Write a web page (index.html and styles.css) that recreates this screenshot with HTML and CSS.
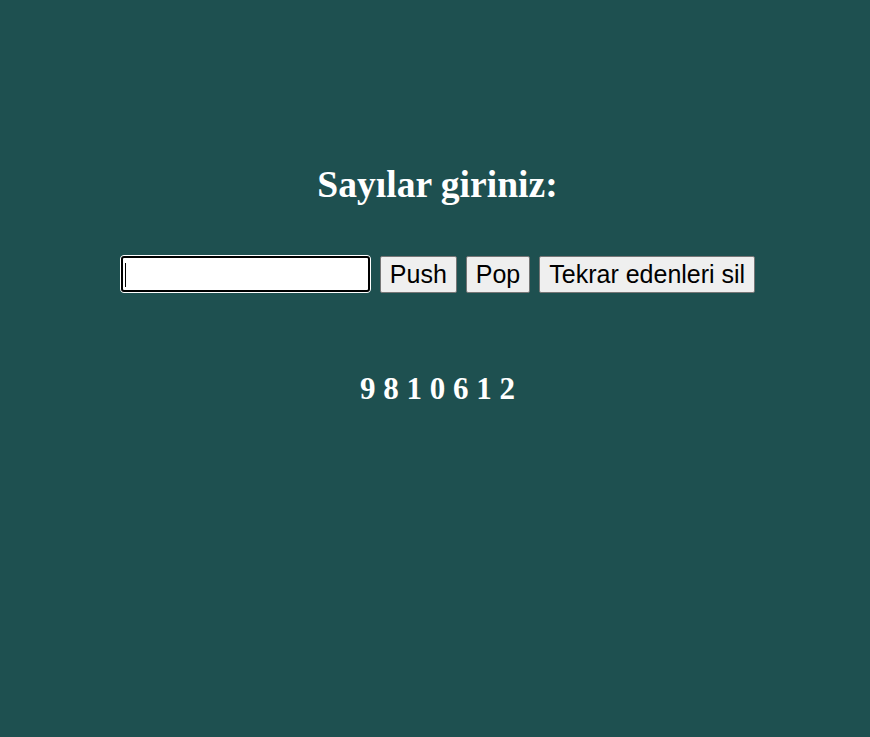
FILE: index.html
```html
<!DOCTYPE html>
<html>
<head>
<meta charset="utf-8">
<link rel="stylesheet" href="styles.css">
</head>
<body>
<div class="page">
  <h1 class="title">Sayılar giriniz:</h1>
  <div class="controls">
    <span class="input-wrap">
      <input class="num-input" type="text">
      <span class="caret"></span>
    </span>
    <button class="btn">Push</button>
    <button class="btn">Pop</button>
    <button class="btn">Tekrar edenleri sil</button>
  </div>
  <div class="stack">9 8 1 0 6 1 2</div>
</div>
</body>
</html>
```

FILE: styles.css
```css
html, body {
  margin: 0;
  padding: 0;
  background: #1e5050;
  height: 100%;
}
.page {
  display: flex;
  flex-direction: column;
  align-items: center;
  padding-top: 160px;
  padding-left: 5px;
  font-family: "Liberation Serif", "Times New Roman", serif;
  color: #fff;
}
.title {
  margin: 0;
  font-size: 37.6px;
  font-weight: bold;
  line-height: 50px;
}
.controls {
  margin-top: 45px;
  display: flex;
  align-items: center;
  gap: 9px;
}
.input-wrap {
  position: relative;
  display: block;
}
.num-input {
  display: block;
  width: 251px;
  height: 38px;
  box-sizing: border-box;
  border: 1px solid #fff;
  outline: 2px solid #000;
  outline-offset: -3px;
  border-radius: 4px;
  background: #fff;
  font-size: 24px;
  font-family: "Liberation Sans", Arial, sans-serif;
  padding: 0 4px;
}
.caret {
  position: absolute;
  left: 5px;
  top: 8px;
  width: 1px;
  height: 24px;
  background: #000;
}
.btn {
  height: 37px;
  font-family: "Liberation Sans", Arial, sans-serif;
  font-size: 25px;
  color: #000;
  background: #efefef;
  border: 1px solid #767676;
  border-radius: 2px;
  padding: 0 9px;
}
.stack {
  margin-top: 78px;
  font-size: 31px;
  font-weight: bold;
  line-height: 36px;
}
```
